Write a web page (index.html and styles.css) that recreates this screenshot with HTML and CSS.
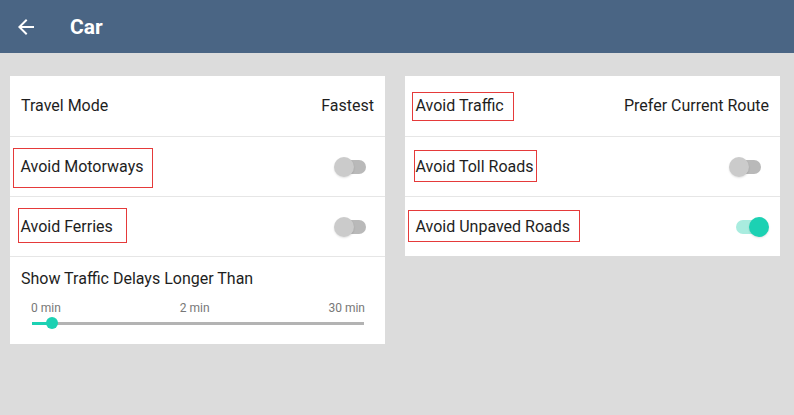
FILE: index.html
```html
<!DOCTYPE html>
<html lang="en">
<head>
    <meta charset="UTF-8">
    <meta name="viewport" content="width=device-width, initial-scale=1.0">
    <title>Car</title>
    <link rel="stylesheet" href="styles.css">
</head>
<body>

    <!-- Top bar -->
    <div class="topbar">
        <svg class="back" viewBox="0 0 24 24" width="24" height="24">
            <path d="M20 11H7.83l5.59-5.59L12 4l-8 8 8 8 1.41-1.41L7.83 13H20v-2z" fill="#fff"/>
        </svg>
        <h1>Car</h1>
    </div>

    <div class="content">

        <!-- Left card -->
        <div class="card">
            <div class="row">
                <span>Travel Mode</span>
                <span>Fastest</span>
            </div>
            <div class="row">
                <span class="mark mark-motorways">Avoid Motorways</span>
                <div class="switch"><div class="track"></div><div class="thumb"></div></div>
            </div>
            <div class="row">
                <span class="mark mark-ferries">Avoid Ferries</span>
                <div class="switch"><div class="track"></div><div class="thumb"></div></div>
            </div>
            <div class="slider-block">
                <div class="slider-title">Show Traffic Delays Longer Than</div>
                <div class="slider-labels">
                    <span>0 min</span>
                    <span>2 min</span>
                    <span>30 min</span>
                </div>
                <div class="slider">
                    <div class="slider-fill"></div>
                    <div class="slider-thumb"></div>
                </div>
            </div>
        </div>

        <!-- Right card -->
        <div class="card">
            <div class="row">
                <span class="mark mark-traffic">Avoid Traffic</span>
                <span>Prefer Current Route</span>
            </div>
            <div class="row">
                <span class="mark mark-toll">Avoid Toll Roads</span>
                <div class="switch"><div class="track"></div><div class="thumb"></div></div>
            </div>
            <div class="row">
                <span class="mark mark-unpaved">Avoid Unpaved Roads</span>
                <div class="switch on"><div class="track"></div><div class="thumb"></div></div>
            </div>
        </div>

    </div>

</body>
</html>
```

FILE: styles.css
```css
body {
    margin: 0;
    font-family: Roboto, "Liberation Sans", sans-serif;
    background-color: #dcdcdc;
    color: #1e1e1e;
}

.topbar {
    height: 53px;
    background-color: #4a6584;
    display: flex;
    align-items: center;
    padding-left: 14px;
}

.topbar .back {
    display: block;
}

.topbar h1 {
    margin: 0 0 0 32px;
    font-size: 21px;
    font-weight: 700;
    color: #fff;
}

.content {
    display: grid;
    grid-template-columns: 375px 375px;
    gap: 20px;
    align-items: start;
    padding: 23px 14px 0 10px;
}

.card {
    background-color: #fff;
}

.row {
    height: 59px;
    padding: 0 11px;
    display: flex;
    align-items: center;
    justify-content: space-between;
    font-size: 16px;
    line-height: 20px;
    border-bottom: 1px solid #e6e6e6;
}

.row:first-child {
    height: 60px;
}

.card:last-child .row:last-child {
    border-bottom: none;
}

/* Red annotation boxes round some labels */
.mark {
    display: inline-block;
    border: 1.5px solid #e53a3a;
}

.mark-motorways {
    padding: 8px 9px 10px 7px;
    margin: -9.5px -10.5px -11.5px -8.5px;
}

.mark-ferries {
    padding: 8px 13px 5px 2px;
    margin: -9.5px -14.5px -6.5px -3.5px;
}

.mark-traffic {
    padding: 3px 9px 4px 3px;
    margin: -4.5px -10.5px -5.5px -4.5px;
}

.mark-toll {
    padding: 6px 2px 4px 1px;
    margin: -7.5px -3.5px -5.5px -2.5px;
}

.mark-unpaved {
    padding: 6px 9px 4px 7px;
    margin: -7.5px -10.5px -5.5px -8.5px;
}

/* Switches */
.switch {
    position: relative;
    width: 40px;
    height: 20px;
}

.switch .track {
    position: absolute;
    left: 7px;
    top: 3px;
    width: 25px;
    height: 14px;
    border-radius: 7px;
    background-color: #b9b9b9;
}

.switch .thumb {
    position: absolute;
    left: 0;
    top: 0;
    width: 20px;
    height: 20px;
    border-radius: 50%;
    background-color: #cbcbcb;
    box-shadow: 0 1px 2px rgba(0, 0, 0, 0.12);
}

.switch.on .track {
    background-color: #a9ecdf;
}

.switch.on .thumb {
    left: 20px;
    background-color: #1cd1b3;
}

/* Traffic delay slider */
.slider-block {
    padding: 12px 20px 13px 11px;
}

.slider-title {
    font-size: 16px;
    line-height: 20px;
}

.slider-labels {
    display: flex;
    justify-content: space-between;
    margin: 12px 0 0 10px;
    font-size: 12px;
    line-height: 14px;
    color: #777;
}

.slider {
    position: relative;
    height: 3px;
    margin: 7px 1px 6px 11px;
    background-color: #b3b3b3;
}

.slider-fill {
    width: 20px;
    height: 3px;
    background-color: #1cd1b3;
}

.slider-thumb {
    position: absolute;
    left: 14px;
    top: -5px;
    width: 12px;
    height: 12px;
    border-radius: 50%;
    background-color: #1cd1b3;
}
```
